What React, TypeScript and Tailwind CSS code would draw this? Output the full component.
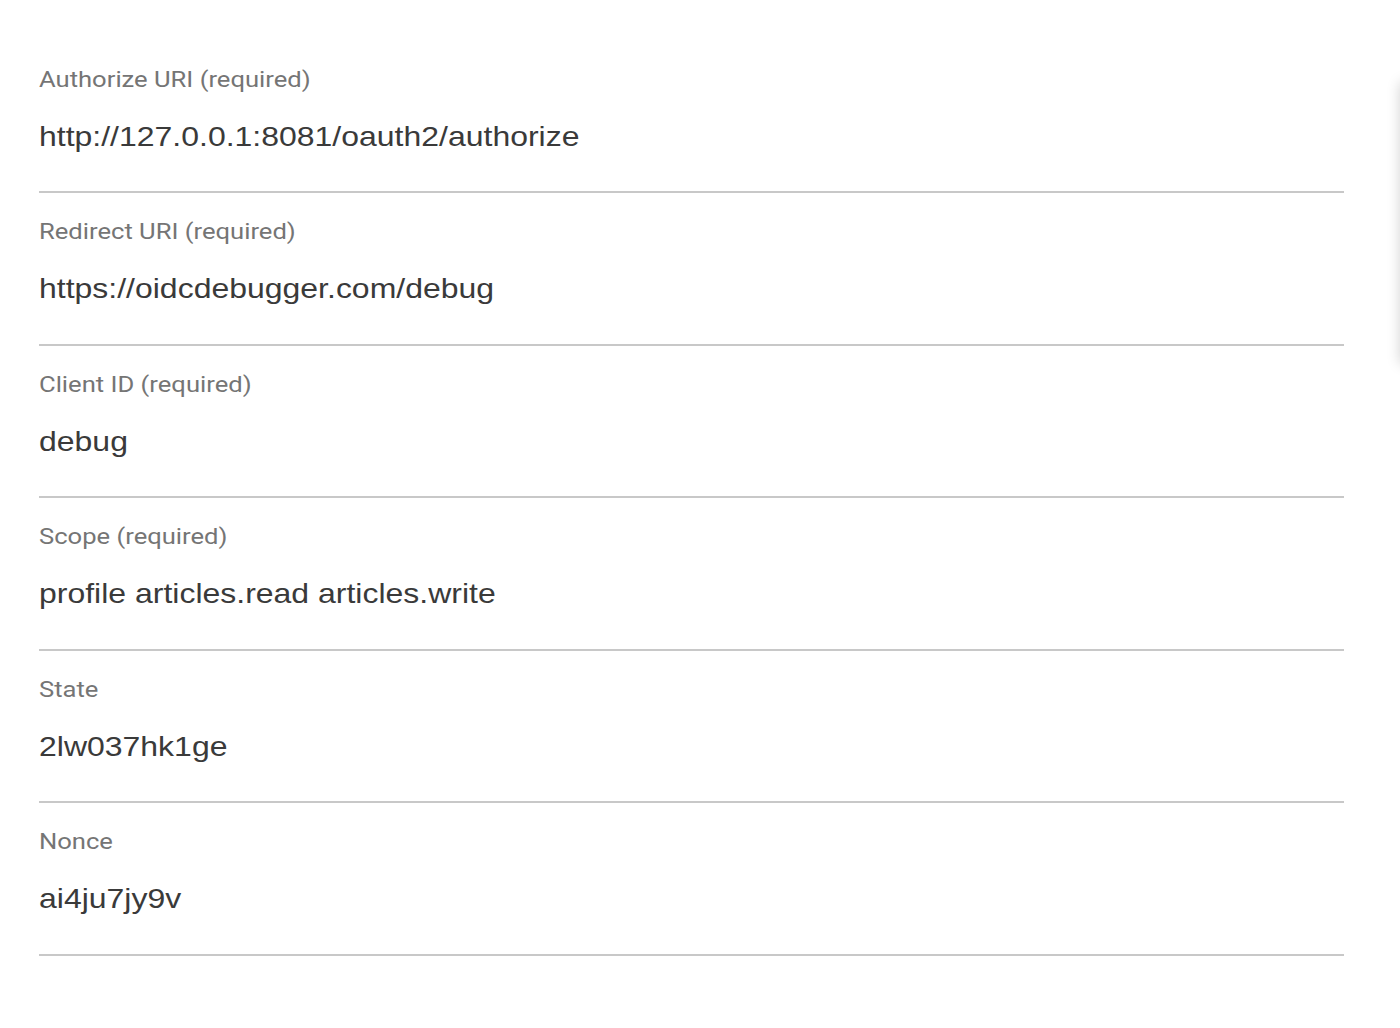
const fields = [
  { label: 'Authorize URI (required)', value: 'http://127.0.0.1:8081/oauth2/authorize' },
  { label: 'Redirect URI (required)', value: 'https://oidcdebugger.com/debug' },
  { label: 'Client ID (required)', value: 'debug' },
  { label: 'Scope (required)', value: 'profile articles.read articles.write' },
  { label: 'State', value: '2lw037hk1ge' },
  { label: 'Nonce', value: 'ai4ju7jy9v' },
]

function Field({ label, value }: { label: string; value: string }) {
  return (
    <div className="border-b-2 border-[#c8c8c8] pt-[27px] pb-[38.5px]">
      <div className="font-['Roboto',sans-serif] text-[22px] leading-[24px] text-[#757575]">
        <span className="inline-block origin-left scale-x-[1.163]">{label}</span>
      </div>
      <div className="mt-[29px] font-['Liberation_Sans',Arial,sans-serif] text-[28px] leading-[32px] text-[#3a3a3a]">
        <span className="inline-block origin-left scale-x-[1.142]">{value}</span>
      </div>
    </div>
  )
}

export default function App() {
  return (
    <div className="relative h-[1028px] w-[1400px] overflow-hidden bg-white">
      <div className="w-[1344px] pl-[39px] pt-[40.5px]">
        {fields.map((f) => (
          <Field key={f.label} label={f.label} value={f.value} />
        ))}
      </div>
      {/* edge of a card that sits off screen */}
      <div className="absolute left-[1400px] top-[82px] h-[282px] w-[40px] rounded bg-white shadow-[0_0_14px_rgba(0,0,0,0.18)]" />
    </div>
  )
}
